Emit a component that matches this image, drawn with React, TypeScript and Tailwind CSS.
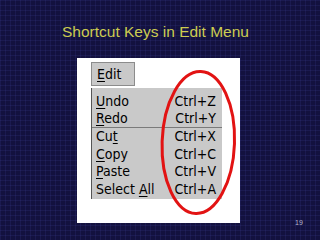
const items = [
  { pre: "", key: "U", post: "ndo", accel: "Ctrl+Z" },
  { pre: "", key: "R", post: "edo", accel: "Ctrl+Y", sep: true },
  { pre: "Cu", key: "t", post: "", accel: "Ctrl+X" },
  { pre: "", key: "C", post: "opy", accel: "Ctrl+C" },
  { pre: "", key: "P", post: "aste", accel: "Ctrl+V" },
  { pre: "Select ", key: "A", post: "ll", accel: "Ctrl+A" },
];

export default function App() {
  return (
    <div className="relative h-[240px] w-[320px] overflow-hidden bg-[#13113f] bg-[linear-gradient(rgba(60,60,150,0.2)_1px,transparent_1px),linear-gradient(90deg,rgba(60,60,150,0.2)_1px,transparent_1px)] bg-[size:5px_5px] font-['Liberation_Sans',Arial,sans-serif]">
      <div className="pl-[62px] pt-[22px] text-[15.5px] leading-[20px] text-[#cccc50]">
        Shortcut Keys in Edit Menu
      </div>

      <div className="relative ml-[77px] mt-[16px] h-[165px] w-[163px] bg-white font-['DejaVu_Sans_Condensed','Liberation_Sans',sans-serif]">
        <div className="pl-[14px] pt-[4px]">
          <div className="h-[24px] w-[44px] border border-[#8c8c8c] bg-[#c9c9c9] pl-[5px] text-[14px] leading-[22px] text-black">
            <u className="underline-offset-2">E</u>dit
          </div>
        </div>

        <div className="ml-[14px] mt-[2px] h-[111px] w-[131px] border-l border-[#555] bg-[#c9c9c9] pt-[5px] text-[14px] text-black">
          {items.map((it) => (
            <div
              key={it.accel}
              className={`flex h-[17.5px] items-center justify-between pl-[4px] pr-[6px] leading-[17.5px] ${
                it.sep ? "border-b border-[#7a7a7a]" : ""
              }`}
            >
              <span>
                {it.pre}
                <u className="underline-offset-2">{it.key}</u>
                {it.post}
              </span>
              <span>{it.accel}</span>
            </div>
          ))}
        </div>

        <svg className="absolute left-0 top-0" width="163" height="165" viewBox="0 0 163 165">
          <ellipse
            cx="121.3"
            cy="84.5"
            rx="36.2"
            ry="71"
            fill="none"
            stroke="#e21313"
            strokeWidth="3"
            transform="rotate(2 121.3 84.5)"
          />
        </svg>
      </div>

      <div className="absolute left-[295px] top-[219px] text-[7px] leading-[8px] text-[#b8b8cc]">19</div>
    </div>
  );
}
